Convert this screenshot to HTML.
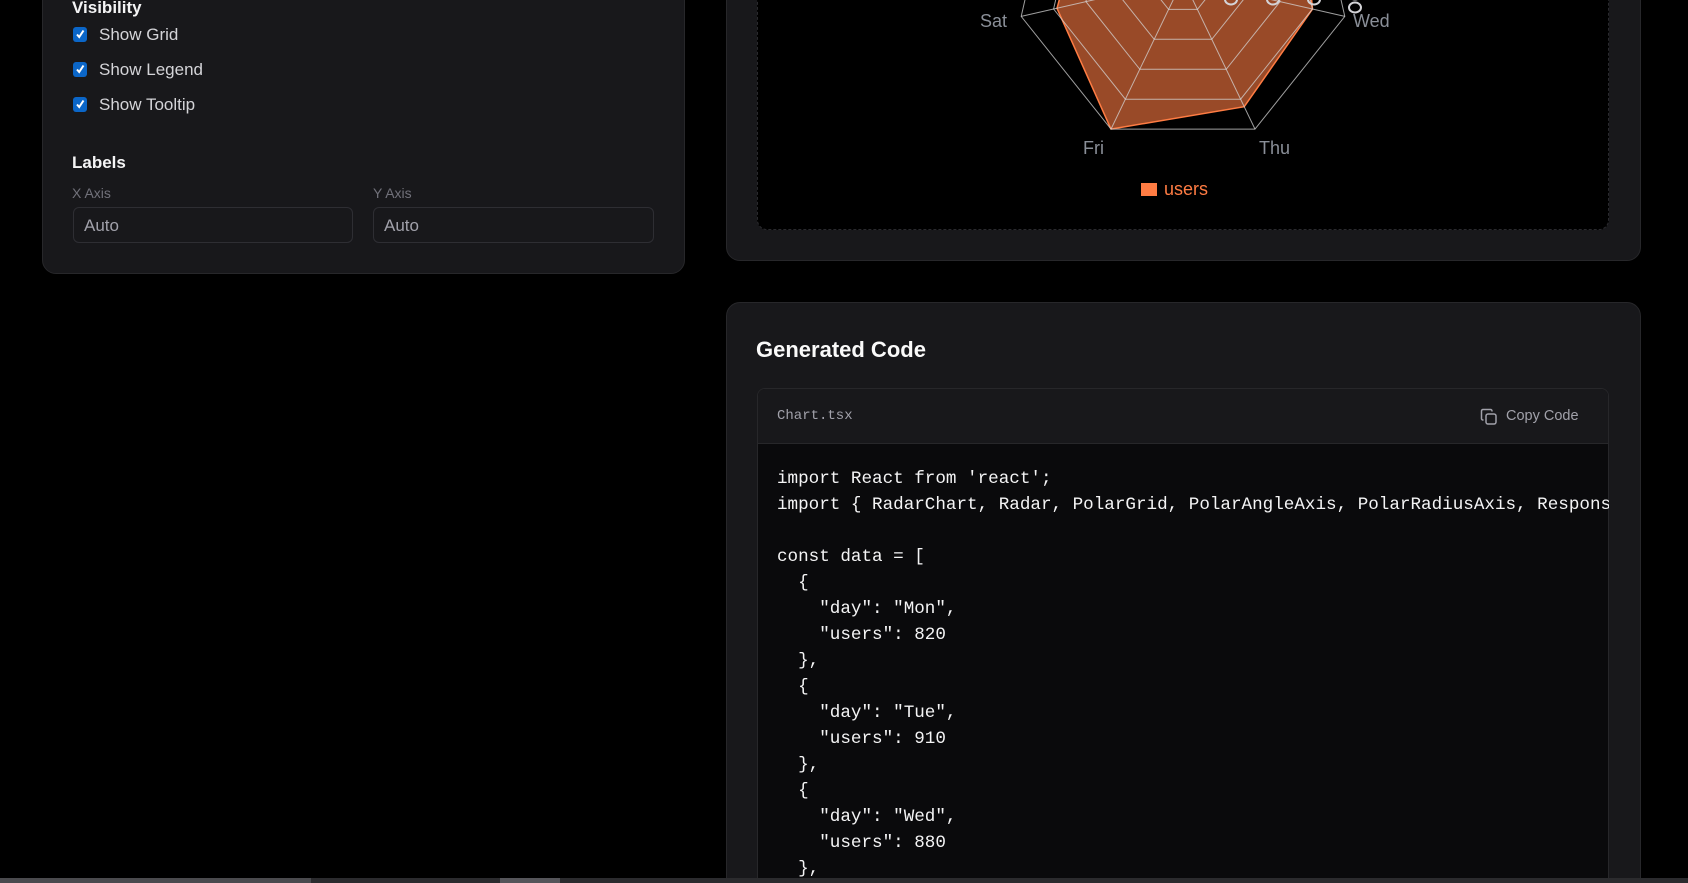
<!DOCTYPE html>
<html style="width:1688px;height:883px;overflow:hidden"><head><meta charset="utf-8"><style>
*{box-sizing:border-box;margin:0;padding:0}
body{width:1688px;height:883px;background:#000;overflow:hidden;position:relative;font-family:"Liberation Sans",sans-serif;color:#e4e4e7}
.card{position:absolute;background:#18181b;border:1px solid #27272a;border-radius:14px}
.abs{position:absolute;white-space:nowrap}
.cb{position:absolute;width:14px;height:15px;background:#0b66c8;border-radius:3px}
.cb svg{position:absolute;left:1px;top:1px}
.lbl{font-size:17px;color:#d4d4d8}
.inp{position:absolute;height:36px;border:1px solid #2e2e33;border-radius:6px;background:#18181b;color:#a1a1aa;font-size:17px;padding:8px 10px}
.code{position:absolute;left:777px;top:465px;font-family:"Liberation Mono",monospace;font-size:17.6px;line-height:26px;color:#f4f4f5;white-space:pre}
</style></head><body>
<div class="card" style="left:42px;top:-20px;width:643px;height:294px"></div>
<div class="abs" style="left:72px;top:-2px;font-size:17px;font-weight:bold;color:#f4f4f5">Visibility</div>
<div class="cb" style="left:73px;top:27px"><svg width="12" height="12"><path d="M3 6.5l2.2 2.5L9.5 2.5" stroke="#fff" stroke-width="2" fill="none"/></svg></div>
<div class="abs lbl" style="left:99px;top:25px">Show Grid</div>
<div class="cb" style="left:73px;top:62px"><svg width="12" height="12"><path d="M3 6.5l2.2 2.5L9.5 2.5" stroke="#fff" stroke-width="2" fill="none"/></svg></div>
<div class="abs lbl" style="left:99px;top:60px">Show Legend</div>
<div class="cb" style="left:73px;top:97px"><svg width="12" height="12"><path d="M3 6.5l2.2 2.5L9.5 2.5" stroke="#fff" stroke-width="2" fill="none"/></svg></div>
<div class="abs lbl" style="left:99px;top:95px">Show Tooltip</div>
<div class="abs" style="left:72px;top:153px;font-size:17px;font-weight:bold;color:#f4f4f5">Labels</div>
<div class="abs" style="left:72px;top:185px;font-size:14px;color:#71717a">X Axis</div>
<div class="abs" style="left:373px;top:185px;font-size:14px;color:#71717a">Y Axis</div>
<div class="inp" style="left:73px;top:207px;width:280px">Auto</div>
<div class="inp" style="left:373px;top:207px;width:281px">Auto</div>

<div class="card" style="left:726px;top:-20px;width:915px;height:281px"></div>
<div class="abs" style="left:757px;top:-10px;width:852px;height:240px;background:#000;border:1px dashed #2a2a2e;border-radius:10px"></div>
<svg class="abs" style="left:0;top:0" width="1688" height="240">
<g transform="translate(1183,-20.5)">
<polygon points="0,-136 118,-94 129.5,29.6 61.2,127.2 -72,149.6 -126,28.8 -97,-78" fill="#ff7c43" fill-opacity="0.6" stroke="#ff7c43" stroke-width="1.5"/>
<g fill="none" stroke="#d4d4d4" stroke-opacity="0.75" stroke-width="1">
<polygon points="0,-166 129.8,-103.5 161.8,36.9 72,149.6 -72,149.6 -161.8,36.9 -129.8,-103.5"/>
<polygon points="0,-132.8 103.8,-82.8 129.4,29.5 57.6,119.7 -57.6,119.7 -129.4,29.5 -103.8,-82.8"/>
<polygon points="0,-99.6 77.9,-62.1 97.1,22.1 43.2,89.8 -43.2,89.8 -97.1,22.1 -77.9,-62.1"/>
<polygon points="0,-66.4 51.9,-41.4 64.7,14.8 28.8,59.8 -28.8,59.8 -64.7,14.8 -51.9,-41.4"/>
<polygon points="0,-33.2 26,-20.7 32.4,7.4 14.4,29.9 -14.4,29.9 -32.4,7.4 -26,-20.7"/>
<path d="M0 0L0 -166M0 0L129.8 -103.5M0 0L161.8 36.9M0 0L72 149.6M0 0L-72 149.6M0 0L-161.8 36.9M0 0L-129.8 -103.5"/>
</g>
<g fill="none" stroke="#d4d4d8" stroke-width="2">
<ellipse cx="48" cy="20" rx="6" ry="5"/><ellipse cx="48" cy="7" rx="6" ry="5"/>
<ellipse cx="90" cy="20" rx="6" ry="5"/><ellipse cx="90" cy="7" rx="6" ry="5"/>
<ellipse cx="131" cy="20" rx="6" ry="5"/><ellipse cx="131" cy="7" rx="6" ry="5"/>
<ellipse cx="172" cy="28" rx="6" ry="5"/><ellipse cx="172" cy="15" rx="6" ry="5"/>
</g>
</g>
<g font-family="Liberation Sans" font-size="18" fill="#8a8f98">
<text x="980" y="27">Sat</text><text x="1353" y="27">Wed</text>
<text x="1083" y="154">Fri</text><text x="1259" y="154">Thu</text>
</g>
<rect x="1141" y="183" width="16" height="13" fill="#ff7c43"/>
<text x="1164" y="195" font-family="Liberation Sans" font-size="18" fill="#ff7c43">users</text>
</svg>

<div class="card" style="left:726px;top:302px;width:915px;height:600px"></div>
<div class="abs" style="left:756px;top:337px;font-size:22px;font-weight:bold;color:#fafafa">Generated Code</div>
<div class="abs" style="left:757px;top:388px;width:852px;height:510px;border:1px solid #27272a;border-radius:8px;background:#0a0a0c;overflow:hidden">
<div style="height:55px;background:#18181b;border-bottom:1px solid #27272a;position:relative">
<div class="abs" style="left:19px;top:19px;font-family:'Liberation Mono',monospace;font-size:14px;color:#a1a1aa">Chart.tsx</div>
<svg class="abs" style="left:722px;top:19px" width="18" height="18" viewBox="0 0 18 18" fill="none" stroke="#a1a1aa" stroke-width="1.5"><rect x="6" y="6" width="10" height="10" rx="2"/><path d="M3.5 12H3a1.5 1.5 0 0 1-1.5-1.5V3A1.5 1.5 0 0 1 3 1.5h7.5A1.5 1.5 0 0 1 12 3v.5"/></svg>
<div class="abs" style="left:748px;top:19px;font-size:14.5px;color:#a1a1aa">Copy Code</div>
</div>
</div>
<div class="abs" style="left:757px;top:443px;width:852px;height:435px;overflow:hidden">
<div class="code" style="left:20px;top:23px">import React from 'react';
import { RadarChart, Radar, PolarGrid, PolarAngleAxis, PolarRadiusAxis, ResponsiveContainer } from 'recharts';

const data = [
  {
    "day": "Mon",
    "users": 820
  },
  {
    "day": "Tue",
    "users": 910
  },
  {
    "day": "Wed",
    "users": 880
  },</div>
</div>
<div class="abs" style="left:0;top:878px;width:1688px;height:5px;background:#2b2b2e"></div>
<div class="abs" style="left:0;top:878px;width:311px;height:5px;background:#4a4a4e"></div>
<div class="abs" style="left:500px;top:878px;width:60px;height:5px;background:#55555a"></div>
</body></html>
